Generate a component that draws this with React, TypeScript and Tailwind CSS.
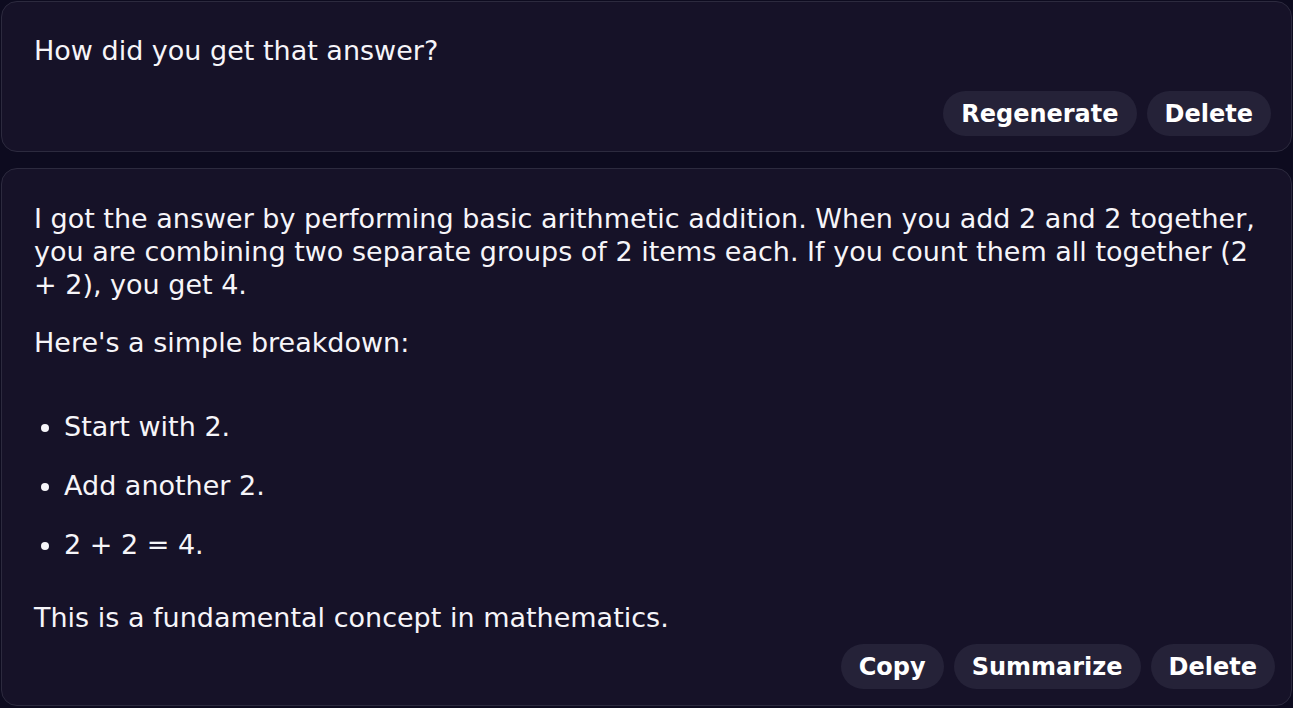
const font = { fontFamily: '"DejaVu Sans", Verdana, sans-serif' };

function Pill({ label }: { label: string }) {
  return (
    <button className="h-[45px] rounded-full bg-[#252238] px-[18px] text-[24px] font-bold leading-none text-white">
      {label}
    </button>
  );
}

export default function App() {
  return (
    <div
      className="min-h-screen bg-[#0d0b1f] px-px pt-px pb-[2px] text-[27px] leading-[33px] text-[#f6f5f9]"
      style={font}
    >
      <div className="flex flex-col gap-[16px]">
        <div className="rounded-2xl border border-[#2c2a3e] bg-[#161228] px-[32px] pt-[32px] pb-[15px]">
          <p>How did you get that answer?</p>
          <div className="mt-[24px] -mr-[12px] flex justify-end gap-[10px]">
            <Pill label="Regenerate" />
            <Pill label="Delete" />
          </div>
        </div>

        <div className="rounded-2xl border border-[#2c2a3e] bg-[#161228] px-[32px] pt-[33px] pb-[16px]">
          <p>
            I got the answer by performing basic arithmetic addition. When you
            add 2 and 2 together, you are combining two separate groups of 2
            items each. If you count them all together (2 + 2), you get 4.
          </p>
          <p className="mt-[25px]">Here's a simple breakdown:</p>
          <ul className="mt-[51px] flex flex-col gap-[26px]">
            {["Start with 2.", "Add another 2.", "2 + 2 = 4."].map((item) => (
              <li key={item} className="flex items-center pl-[7px]">
                <span className="mt-[3px] mr-[15px] size-[8px] shrink-0 rounded-full bg-[#f6f5f9]" />
                {item}
              </li>
            ))}
          </ul>
          <p className="mt-[40px]">This is a fundamental concept in mathematics.</p>
          <div className="mt-[10px] -mr-[16px] flex justify-end gap-[10px]">
            <Pill label="Copy" />
            <Pill label="Summarize" />
            <Pill label="Delete" />
          </div>
        </div>
      </div>
    </div>
  );
}
